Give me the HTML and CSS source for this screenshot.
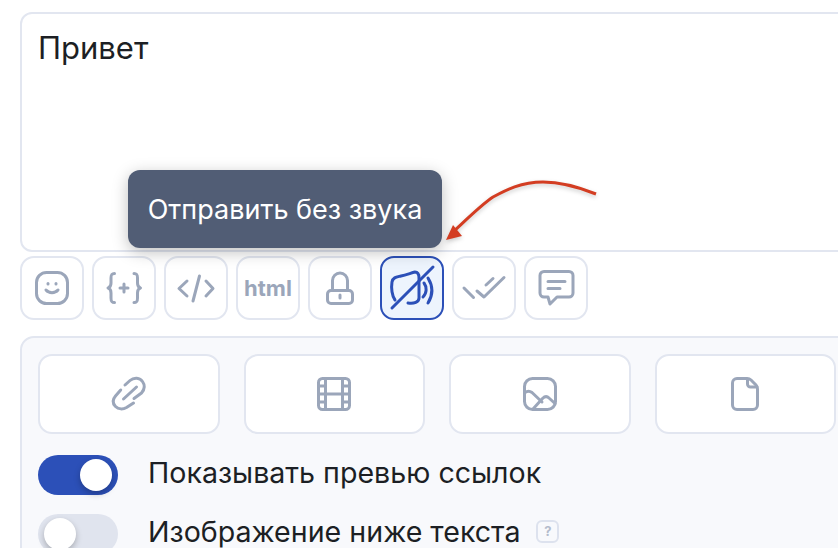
FILE: index.html
```html
<!DOCTYPE html>
<html lang="en">

<head>
    <meta charset="UTF-8">
    <meta name="viewport" content="width=device-width, initial-scale=1.0">
    <title>Message editor</title>
    <link rel="stylesheet" href="styles.css">
</head>

<body>
    <div class="page">
        <div class="editor">
            <div class="message-box">Привет</div>

            <div class="tooltip">Отправить без звука</div>

            <!-- Red hand drawn arrow over the screenshot -->
            <svg class="arrow" width="170" height="80" viewBox="0 0 170 80">
                <path class="arrow-line" d="M160 24C135 14 120 12 107 12C85 12 70 20 57 27C45 35 30 50 17 62" />
                <path class="arrow-head" d="M10 70L17 55L26 66Z" />
            </svg>

            <div class="toolbar">
                <button class="tool">
                    <svg class="icon" viewBox="0 0 40 40">
                        <rect x="4.500" y="4.500" width="31" height="31" rx="10" />
                        <path d="M14 22c3 3.500 9 3.500 12 0" />
                        <path d="M16 15.500v.5M24 15.500v.5" />
                    </svg>
                </button>
                <button class="tool">
                    <svg class="icon" viewBox="0 0 40 40">
                        <path d="M10.500 5.500C7 5.500 7 7.500 7 10v5c0 3-1 4.500-3 5 2 .5 3 2 3 5v5c0 2.500 0 4.500 3.500 4.500" />
                        <path d="M30 5.500c3.500 0 3.500 2 3.500 4.500v5c0 3 1 4.500 3 5-2 .5-3 2-3 5v5c0 2.500 0 4.500-3.500 4.500" />
                        <path d="M20 16v8M16 20h8" />
                    </svg>
                </button>
                <button class="tool">
                    <svg class="icon" viewBox="0 0 40 40">
                        <path d="M11 13L3 20.500L11 28" />
                        <path d="M23.500 8L17 33" />
                        <path d="M30 13L37 20.500L30 28" />
                    </svg>
                </button>
                <button class="tool tool-text">html</button>
                <button class="tool">
                    <svg class="icon" viewBox="0 0 40 40">
                        <rect x="7.500" y="22.500" width="25" height="13" rx="3.500" />
                        <path d="M12.500 22v-9.500a7.500 7.500 0 0 1 15 0V22" />
                        <path d="M20 27v3" />
                    </svg>
                </button>
                <button class="tool tool-active">
                    <svg class="icon" viewBox="0 0 40 40">
                        <path d="M3 32C0 28-1 20 0 14C1 9 5 9 9 8C14 7 19 5 23 4C26 4 27 6 27 10V30C27 34 22 36 16 35" />
                        <path d="M32 15C35 19 35 25 31 29" />
                        <path d="M36 10C41 18 41 27 36 35" />
                        <path d="M0 40L41 -1" />
                    </svg>
                </button>
                <button class="tool">
                    <svg class="icon" viewBox="0 0 40 40">
                        <path d="M0 20L9.500 29.500" />
                        <path d="M13 23L20 29L40 9.500" />
                        <path d="M22 17L29 10.500" />
                    </svg>
                </button>
                <button class="tool">
                    <svg class="icon" viewBox="0 0 40 40">
                        <path d="M8 3.500H33A4 4 0 0 1 37 7.500V25A4 4 0 0 1 33 29H21L14 36L12 29H8A4 4 0 0 1 4 25V7.500A4 4 0 0 1 8 3.500Z" />
                        <path d="M12 13.500H29M12 20.500H24" />
                    </svg>
                </button>
            </div>

            <div class="panel">
                <div class="cards">
                    <button class="card">
                        <svg class="icon" viewBox="0 0 40 40">
                            <path d="M16 11L21 6.500C25 3 31 3.500 33.500 7.500C36 11 35.500 15.500 32.500 19L25 24.500" />
                            <path d="M11.700 16L6.500 22C3.500 25.500 3.500 29.500 6.500 32.500C9.500 35.500 14 35.500 17.500 33.500L24.500 29" />
                            <path d="M14.500 25L27.500 13" />
                        </svg>
                    </button>
                    <button class="card">
                        <svg class="icon" viewBox="0 0 40 40">
                            <rect x="4.500" y="4.500" width="31" height="31" rx="4" />
                            <path d="M11.500 5V35M28.500 5V35" />
                            <path d="M5 12H11M5 20H35M5 28H11M29 12H35M29 28H35" />
                        </svg>
                    </button>
                    <button class="card">
                        <svg class="icon" viewBox="0 0 40 40">
                            <rect x="4.500" y="4.500" width="31" height="31" rx="8" />
                            <path d="M5 18.500C7 17 10 17 12 18.500L22 28" />
                            <path d="M13 35L22.500 24.500C25 22 27 22 29 24L35 29.500" />
                        </svg>
                    </button>
                    <button class="card">
                        <svg class="icon" viewBox="0 0 40 40">
                            <path d="M12 4.500H22C24 4.500 25 5 26 6L31 11C32 12 32.500 13 32.500 15V31A4.500 4.500 0 0 1 28 35.500H12A4.500 4.500 0 0 1 7.500 31V9A4.500 4.500 0 0 1 12 4.500Z" />
                            <path d="M22.500 5V10A3 3 0 0 0 25.500 13H32" />
                        </svg>
                    </button>
                </div>

                <div class="option">
                    <span class="switch switch-on"><span class="knob"></span></span>
                    <span class="option-label">Показывать превью ссылок</span>
                </div>
                <div class="option">
                    <span class="switch"><span class="knob"></span></span>
                    <span class="option-label">Изображение ниже текста</span>
                    <span class="hint">?</span>
                </div>
            </div>
        </div>
    </div>
</body>

</html>
```

FILE: styles.css
```css
* {
    margin: 0;
    padding: 0;
    box-sizing: border-box;
}

body {
    font-family: Inter, "Noto Sans", Arial, sans-serif;
    background: #fff;
    overflow: hidden;
}

.page {
    width: 838px;
    height: 548px;
    overflow: hidden;
    padding: 12px 0 0 20px;
}

/* Editor column runs past the right edge of the window */
.editor {
    position: relative;
    width: 860px;
}

.message-box {
    height: 240px;
    padding: 14px 16px;
    border: 2px solid #e2e6f0;
    border-radius: 12px;
    font-size: 31px;
    line-height: 40px;
    color: #1c1f24;
}

.tooltip {
    position: absolute;
    top: 158px;
    left: 108px;
    width: 314px;
    height: 78px;
    display: flex;
    align-items: center;
    justify-content: center;
    background: #515d75;
    border-radius: 12px;
    box-shadow: 0 4px 16px rgba(0, 0, 0, 0.25);
    color: #fff;
    font-size: 27px;
}

.arrow {
    position: absolute;
    top: 158px;
    left: 416px;
    filter: drop-shadow(0 2px 2px rgba(0, 0, 0, 0.2));
}

.arrow-line {
    fill: none;
    stroke: #d33d22;
    stroke-width: 3;
}

.arrow-head {
    fill: #d33d22;
}

.toolbar {
    display: flex;
    gap: 8px;
    margin-top: 4px;
}

.tool {
    width: 64px;
    height: 64px;
    display: flex;
    align-items: center;
    justify-content: center;
    background: #fff;
    border: 2px solid #e2e6f0;
    border-radius: 14px;
    color: #9ba6ba;
}

.tool-text {
    font-family: inherit;
    font-size: 22px;
    font-weight: 700;
}

.tool-active {
    background: #edf4fd;
    border-color: #2c50b8;
    color: #2c50b8;
}

.icon {
    width: 40px;
    height: 40px;
    overflow: visible;
    fill: none;
    stroke: currentColor;
    stroke-width: 3;
    stroke-linecap: round;
    stroke-linejoin: round;
}

.panel {
    margin-top: 16px;
    padding: 16px;
    background: #f8f9fc;
    border: 2px solid #e2e6f0;
    border-radius: 14px;
    height: 300px;
}

.cards {
    display: flex;
    gap: 24px;
    margin-bottom: 21px;
}

.card {
    width: 181.500px;
    height: 80px;
    display: flex;
    align-items: center;
    justify-content: center;
    background: #fff;
    border: 2px solid #e2e6f0;
    border-radius: 14px;
    color: #9ba6ba;
}

.option {
    display: flex;
    align-items: center;
    height: 40px;
    margin-bottom: 19px;
}

.switch {
    width: 80px;
    height: 40px;
    padding: 4px 6px;
    display: flex;
    background: #e0e4ee;
    border-radius: 20px;
    margin-right: 30px;
}

.switch-on {
    justify-content: flex-end;
    background: #2c50b8;
}

.knob {
    width: 32px;
    height: 32px;
    background: #fff;
    border-radius: 50%;
    box-shadow: 0 3px 6px rgba(0, 0, 0, 0.25);
}

.option-label {
    font-size: 28.600px;
    line-height: 36px;
    margin-bottom: 4px;
    color: #1c1f24;
}

.hint {
    width: 23px;
    height: 23px;
    margin: 0 0 6px 16px;
    display: flex;
    align-items: center;
    justify-content: center;
    border: 2px solid #dde2ee;
    border-radius: 6px;
    color: #b4bccc;
    font-size: 13px;
    font-weight: 700;
}
```
